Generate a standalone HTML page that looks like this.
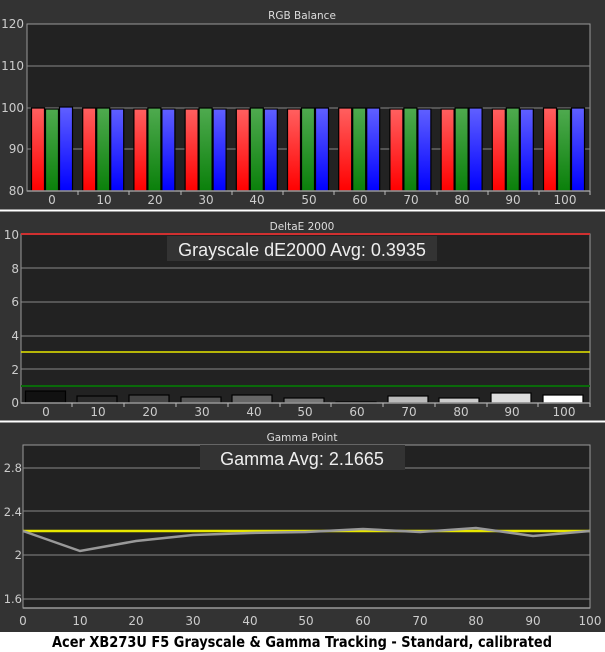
<!DOCTYPE html>
<html><head><style>
html,body{margin:0;padding:0;background:#fff;}
svg{display:block;font-family:"DejaVu Sans","Liberation Sans",sans-serif;}
</style></head><body>
<svg width="605" height="652" viewBox="0 0 605 652" xmlns="http://www.w3.org/2000/svg">
<defs>
<linearGradient id="gr" x1="0" y1="0" x2="0" y2="1"><stop offset="0" stop-color="#ff6060"/><stop offset="1" stop-color="#ff0000"/></linearGradient>
<linearGradient id="gg" x1="0" y1="0" x2="0" y2="1"><stop offset="0" stop-color="#4faa4f"/><stop offset="1" stop-color="#0a800a"/></linearGradient>
<linearGradient id="gb" x1="0" y1="0" x2="0" y2="1"><stop offset="0" stop-color="#6060ff"/><stop offset="1" stop-color="#0000ff"/></linearGradient>
</defs>
<rect x="0" y="0" width="605" height="632" fill="#333"/>
<rect x="0" y="632" width="605" height="20" fill="#fff"/>
<line x1="0" y1="210.5" x2="605" y2="210.5" stroke="#fff" stroke-width="2"/>
<line x1="0" y1="421.5" x2="605" y2="421.5" stroke="#fff" stroke-width="2"/>

<!-- Panel 1 -->
<text x="302" y="19" fill="#ddd" font-size="10.5" text-anchor="middle">RGB Balance</text>
<rect x="27" y="24" width="563" height="167" fill="#222" stroke="#999" stroke-width="1"/>
<g stroke="#888" stroke-width="1">
<line x1="27" y1="66" x2="590" y2="66"/><line x1="27" y1="108" x2="590" y2="108"/><line x1="27" y1="149" x2="590" y2="149"/>
</g>
<g fill="#ccc" font-size="12" text-anchor="end">
<text x="24" y="28">120</text><text x="24" y="70">110</text><text x="24" y="112">100</text><text x="24" y="153">90</text><text x="24" y="195">80</text>
</g>
<g stroke="#000" stroke-width="1.2">
<rect x="31.5" y="108" width="13" height="83" fill="url(#gr)"/><rect x="45.5" y="109" width="13" height="82" fill="url(#gg)"/><rect x="59.5" y="107" width="13" height="84" fill="url(#gb)"/>
<rect x="82.7" y="108" width="13" height="83" fill="url(#gr)"/><rect x="96.7" y="108" width="13" height="83" fill="url(#gg)"/><rect x="110.7" y="109" width="13" height="82" fill="url(#gb)"/>
<rect x="133.9" y="109" width="13" height="82" fill="url(#gr)"/><rect x="147.9" y="108" width="13" height="83" fill="url(#gg)"/><rect x="161.9" y="109" width="13" height="82" fill="url(#gb)"/>
<rect x="185.1" y="109" width="13" height="82" fill="url(#gr)"/><rect x="199.1" y="108" width="13" height="83" fill="url(#gg)"/><rect x="213.1" y="109" width="13" height="82" fill="url(#gb)"/>
<rect x="236.3" y="109" width="13" height="82" fill="url(#gr)"/><rect x="250.3" y="108" width="13" height="83" fill="url(#gg)"/><rect x="264.3" y="109" width="13" height="82" fill="url(#gb)"/>
<rect x="287.5" y="109" width="13" height="82" fill="url(#gr)"/><rect x="301.5" y="108" width="13" height="83" fill="url(#gg)"/><rect x="315.5" y="108" width="13" height="83" fill="url(#gb)"/>
<rect x="338.7" y="108" width="13" height="83" fill="url(#gr)"/><rect x="352.7" y="108" width="13" height="83" fill="url(#gg)"/><rect x="366.7" y="108" width="13" height="83" fill="url(#gb)"/>
<rect x="389.9" y="109" width="13" height="82" fill="url(#gr)"/><rect x="403.9" y="108" width="13" height="83" fill="url(#gg)"/><rect x="417.9" y="109" width="13" height="82" fill="url(#gb)"/>
<rect x="441.1" y="109" width="13" height="82" fill="url(#gr)"/><rect x="455.1" y="108" width="13" height="83" fill="url(#gg)"/><rect x="469.1" y="108" width="13" height="83" fill="url(#gb)"/>
<rect x="492.3" y="109" width="13" height="82" fill="url(#gr)"/><rect x="506.3" y="108" width="13" height="83" fill="url(#gg)"/><rect x="520.3" y="109" width="13" height="82" fill="url(#gb)"/>
<rect x="543.5" y="108" width="13" height="83" fill="url(#gr)"/><rect x="557.5" y="109" width="13" height="82" fill="url(#gg)"/><rect x="571.5" y="108" width="13" height="83" fill="url(#gb)"/>
</g>
<line x1="27" y1="191" x2="590" y2="191" stroke="#999" stroke-width="1.5"/>
<g stroke="#bbb"><line x1="78" y1="191" x2="78" y2="195"/><line x1="129" y1="191" x2="129" y2="195"/><line x1="181" y1="191" x2="181" y2="195"/><line x1="232" y1="191" x2="232" y2="195"/><line x1="283" y1="191" x2="283" y2="195"/><line x1="334" y1="191" x2="334" y2="195"/><line x1="385" y1="191" x2="385" y2="195"/><line x1="437" y1="191" x2="437" y2="195"/><line x1="488" y1="191" x2="488" y2="195"/><line x1="539" y1="191" x2="539" y2="195"/><line x1="590" y1="191" x2="590" y2="195"/></g>
<g fill="#ccc" font-size="12" text-anchor="middle">
<text x="52" y="204">0</text><text x="104" y="204">10</text><text x="155" y="204">20</text><text x="206" y="204">30</text><text x="257" y="204">40</text><text x="309" y="204">50</text><text x="360" y="204">60</text><text x="411" y="204">70</text><text x="462" y="204">80</text><text x="513" y="204">90</text><text x="565" y="204">100</text>
</g>

<!-- Panel 2 -->
<text x="302" y="230" fill="#ddd" font-size="10.5" text-anchor="middle">DeltaE 2000</text>
<rect x="21" y="234" width="569" height="169" fill="#222" stroke="#999" stroke-width="1"/>
<g stroke="#888" stroke-width="1">
<line x1="21" y1="268" x2="590" y2="268"/><line x1="21" y1="302" x2="590" y2="302"/><line x1="21" y1="336" x2="590" y2="336"/><line x1="21" y1="369" x2="590" y2="369"/>
</g>
<line x1="21" y1="352" x2="590" y2="352" stroke="#e8e800" stroke-width="1.5"/>
<line x1="21" y1="386" x2="590" y2="386" stroke="#0a6a0a" stroke-width="2"/>
<line x1="21" y1="234" x2="590" y2="234" stroke="#d03030" stroke-width="2"/>
<g fill="#ccc" font-size="12" text-anchor="end">
<text x="19" y="239">10</text><text x="19" y="273">8</text><text x="19" y="306">6</text><text x="19" y="340">4</text><text x="19" y="374">2</text><text x="19" y="407">0</text>
</g>
<g stroke="#000" stroke-width="1.2">
<rect x="25.5" y="391" width="40" height="12" fill="#111"/>
<rect x="77" y="396" width="40" height="7" fill="#2a2a2a"/>
<rect x="129" y="395" width="40" height="8" fill="#444"/>
<rect x="181" y="397" width="40" height="6" fill="#555"/>
<rect x="232" y="395" width="40" height="8" fill="#666"/>
<rect x="284" y="398" width="40" height="5" fill="#777"/>
<rect x="336" y="402" width="40" height="1" fill="#888"/>
<rect x="388" y="396" width="40" height="7" fill="#bbb"/>
<rect x="439" y="398" width="40" height="5" fill="#ccc"/>
<rect x="491" y="393" width="40" height="10" fill="#ddd"/>
<rect x="543" y="395" width="40" height="8" fill="#fff"/>
</g>
<line x1="21" y1="403" x2="590" y2="403" stroke="#999" stroke-width="1.5"/>
<g stroke="#bbb"><line x1="72" y1="403" x2="72" y2="407"/><line x1="124" y1="403" x2="124" y2="407"/><line x1="176" y1="403" x2="176" y2="407"/><line x1="228" y1="403" x2="228" y2="407"/><line x1="280" y1="403" x2="280" y2="407"/><line x1="331" y1="403" x2="331" y2="407"/><line x1="383" y1="403" x2="383" y2="407"/><line x1="435" y1="403" x2="435" y2="407"/><line x1="487" y1="403" x2="487" y2="407"/><line x1="538" y1="403" x2="538" y2="407"/><line x1="590" y1="403" x2="590" y2="407"/></g>
<g fill="#ccc" font-size="12" text-anchor="middle">
<text x="46" y="416">0</text><text x="98" y="416">10</text><text x="150" y="416">20</text><text x="202" y="416">30</text><text x="254" y="416">40</text><text x="305" y="416">50</text><text x="357" y="416">60</text><text x="409" y="416">70</text><text x="461" y="416">80</text><text x="512" y="416">90</text><text x="564" y="416">100</text>
</g>
<rect x="167" y="236" width="270" height="25" fill="#333"/>
<text x="302" y="256" fill="#eee" font-size="18" font-family="Liberation Sans, sans-serif" text-anchor="middle">Grayscale dE2000 Avg: 0.3935</text>

<!-- Panel 3 -->
<text x="302" y="441" fill="#ddd" font-size="10.5" text-anchor="middle">Gamma Point</text>
<rect x="23" y="445" width="567" height="163" fill="#222" stroke="#999" stroke-width="1"/>
<g stroke="#888" stroke-width="1">
<line x1="23" y1="468" x2="590" y2="468"/><line x1="23" y1="511" x2="590" y2="511"/><line x1="23" y1="555" x2="590" y2="555"/><line x1="23" y1="599" x2="590" y2="599"/>
</g>
<g fill="#ccc" font-size="11.5" text-anchor="end">
<text x="22" y="472">2.8</text><text x="22" y="516">2.4</text><text x="22" y="559">2</text><text x="22" y="603">1.6</text>
</g>
<line x1="23" y1="531" x2="590" y2="531" stroke="#e8e800" stroke-width="2.5"/>
<polyline fill="none" stroke="#999" stroke-width="2.5" points="23,531 80,551 136,541 193,535 250,533 306,532 363,529 420,532 476,528 533,536 590,531"/>
<line x1="23" y1="608" x2="590" y2="608" stroke="#999" stroke-width="1.5"/>
<g fill="#ccc" font-size="12" text-anchor="middle">
<text x="23" y="625">0</text><text x="80" y="625">10</text><text x="136" y="625">20</text><text x="193" y="625">30</text><text x="250" y="625">40</text><text x="306" y="625">50</text><text x="363" y="625">60</text><text x="420" y="625">70</text><text x="476" y="625">80</text><text x="533" y="625">90</text><text x="590" y="625">100</text>
</g>
<rect x="200" y="445" width="205" height="25" fill="#333"/>
<text x="302" y="465" fill="#eee" font-size="18" font-family="Liberation Sans, sans-serif" text-anchor="middle">Gamma Avg: 2.1665</text>

<text x="302" y="647" fill="#000" font-size="15" font-weight="bold" font-family="DejaVu Sans, sans-serif" text-anchor="middle" textLength="500" lengthAdjust="spacingAndGlyphs">Acer XB273U F5 Grayscale &amp; Gamma Tracking - Standard, calibrated</text>
</svg>
</body></html>
